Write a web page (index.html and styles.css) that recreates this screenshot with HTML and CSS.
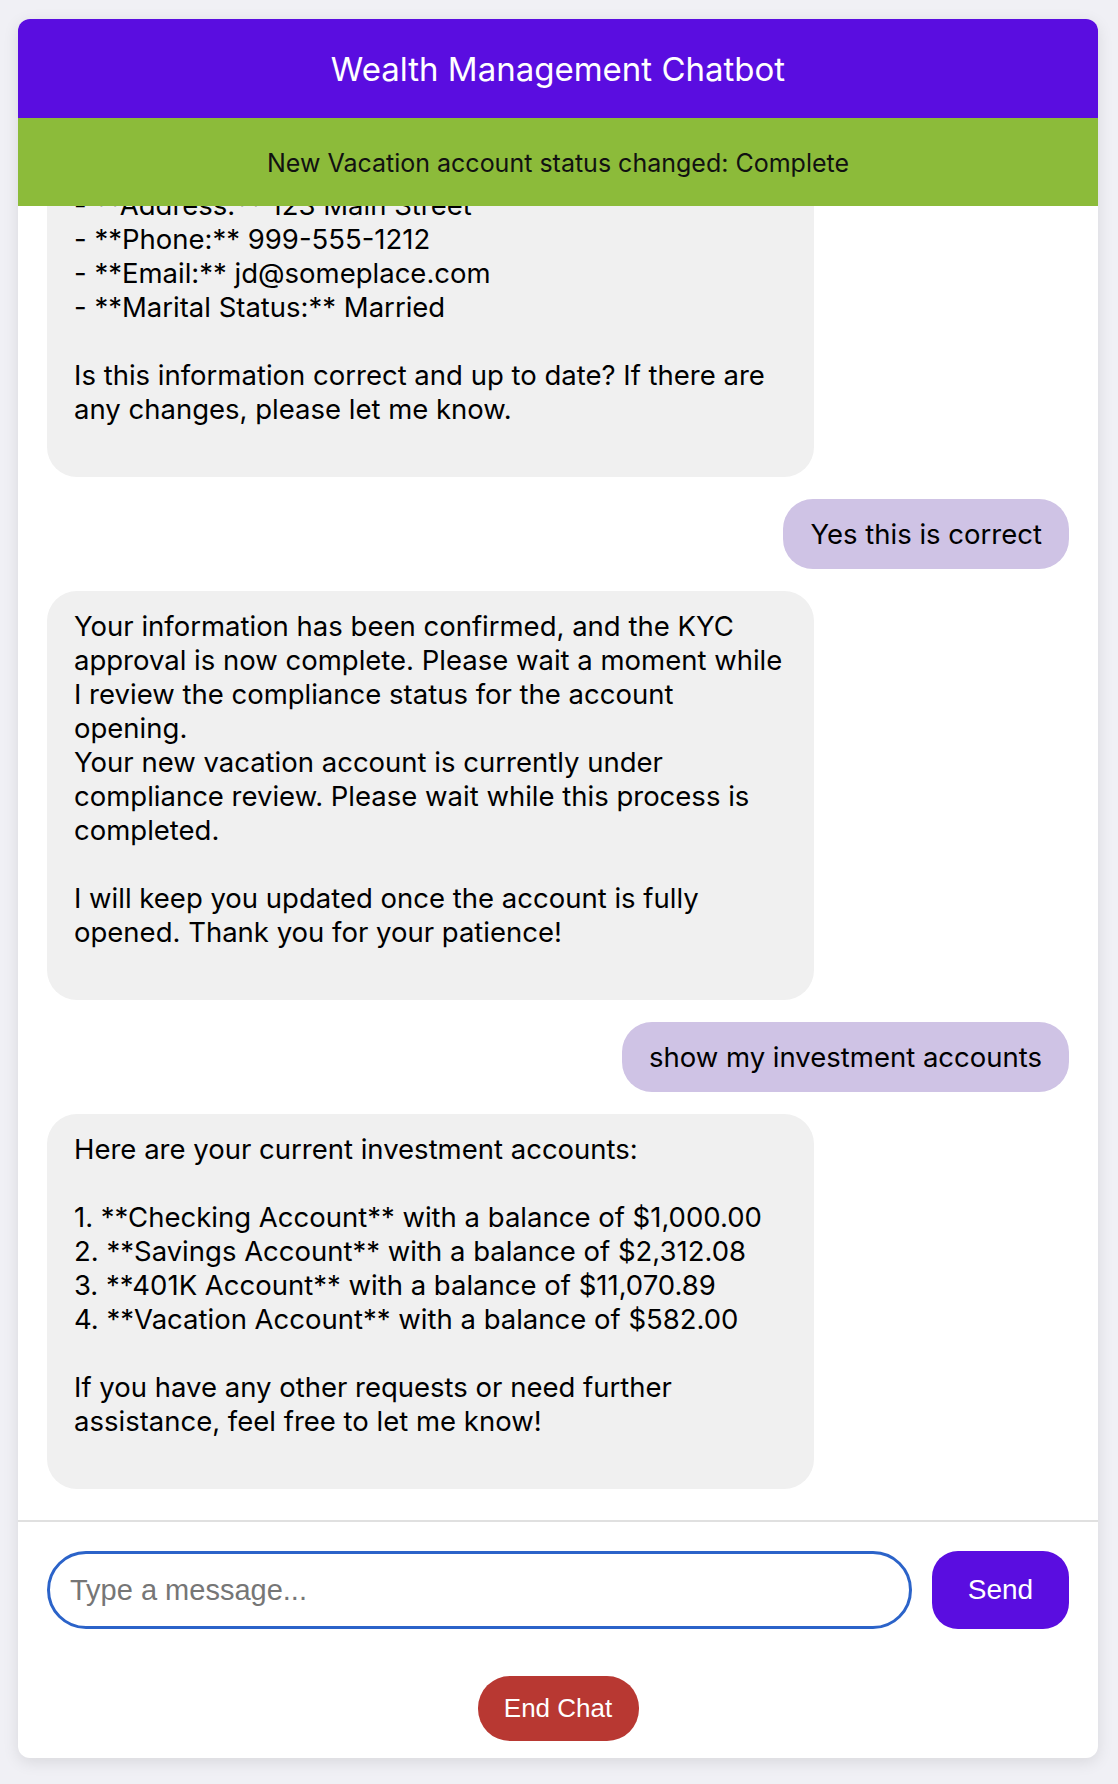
FILE: index.html
```html
<!DOCTYPE html>
<html lang="en">
<head>
<meta charset="utf-8">
<title>Wealth Management Chatbot</title>
<link rel="stylesheet" href="styles.css">
</head>
<body>
<div class="chat">
  <header class="chat-header">Wealth Management Chatbot</header>
  <div class="notice">New Vacation account status changed: Complete</div>
  <div class="messages">
    <div class="msg bot">- **Address:** 123 Main Street
- **Phone:** 999-555-1212
- **Email:** jd@someplace.com
- **Marital Status:** Married

Is this information correct and up to date? If there are
any changes, please let me know.</div>
    <div class="msg user">Yes this is correct</div>
    <div class="msg bot">Your information has been confirmed, and the KYC
approval is now complete. Please wait a moment while
I review the compliance status for the account
opening.
Your new vacation account is currently under
compliance review. Please wait while this process is
completed.

I will keep you updated once the account is fully
opened. Thank you for your patience!</div>
    <div class="msg user">show my investment accounts</div>
    <div class="msg bot">Here are your current investment accounts:

1. **Checking Account** with a balance of $1,000.00
2. **Savings Account** with a balance of $2,312.08
3. **401K Account** with a balance of $11,070.89
4. **Vacation Account** with a balance of $582.00

If you have any other requests or need further
assistance, feel free to let me know!</div>
  </div>
  <div class="composer">
    <div class="input-row">
      <input class="msg-input" type="text" placeholder="Type a message..." autofocus>
      <button class="send-btn">Send</button>
    </div>
    <div class="end-row">
      <button class="end-btn">End Chat</button>
    </div>
  </div>
</div>
</body>
</html>
```
FILE: styles.css
```css
html, body {
  margin: 0;
  padding: 0;
}

body {
  background: #f0f0f5;
  padding: 19px 20px 18px 18px;
  font-family: Inter, "Noto Sans", "Liberation Sans", sans-serif;
  color: #000;
}

.chat {
  max-width: 1080px;
  margin: 0 auto;
  height: calc(100vh - 45px);
  background: #fff;
  border-radius: 12px;
  overflow: hidden;
  box-shadow: 0 4px 16px rgba(0, 0, 0, 0.1);
  display: flex;
  flex-direction: column;
}

.chat-header {
  background: #5a0de0;
  color: #fff;
  text-align: center;
  font-size: 33px;
  line-height: 39px;
  padding: 31px 16px 29px;
  flex-shrink: 0;
}

.notice {
  background: #8cbb3a;
  color: #111;
  text-align: center;
  font-size: 25px;
  line-height: 29px;
  padding: 31px 16px 28px;
  flex-shrink: 0;
}

.messages {
  flex: 1;
  min-height: 0;
  display: flex;
  flex-direction: column;
  justify-content: flex-end;
  gap: 22px;
  padding: 0 29px 31px;
  overflow: hidden;
  border-bottom: 2px solid #e0e0e0;
}

.msg {
  flex-shrink: 0;
  box-sizing: border-box;
  font-size: 27.5px;
  line-height: 34px;
  padding: 18px 27px;
  border-radius: 30px;
  white-space: pre-wrap;
}

.msg.bot {
  align-self: flex-start;
  width: 75%;
  background: #f0f0f0;
  padding-bottom: 51px;
  white-space: pre;
}

.msg.user {
  align-self: flex-end;
  max-width: 75%;
  background: #cfc3e5;
}

.composer {
  flex-shrink: 0;
  padding: 29px 29px 17px;
}

.input-row {
  display: flex;
  gap: 20px;
}

.msg-input {
  flex: 1;
  min-width: 0;
  box-sizing: border-box;
  height: 78px;
  border: 3px solid #2b63c9;
  border-radius: 39px;
  padding: 0 20px;
  font-family: "Liberation Sans", Arial, sans-serif;
  font-size: 29px;
  color: #000;
  caret-color: #000;
  outline: none;
  background: #fff;
}

.msg-input::placeholder {
  color: #767676;
}

.send-btn {
  width: 137px;
  height: 78px;
  border: none;
  border-radius: 26px;
  background: #5a0de0;
  color: #fff;
  font-family: "Liberation Sans", Arial, sans-serif;
  font-size: 28px;
  cursor: pointer;
}

.end-row {
  margin-top: 47px;
  display: flex;
  justify-content: center;
}

.end-btn {
  width: 161px;
  height: 65px;
  border: none;
  border-radius: 32px;
  background: #b83832;
  color: #fff;
  font-family: "Liberation Sans", Arial, sans-serif;
  font-size: 26px;
  cursor: pointer;
}
```
